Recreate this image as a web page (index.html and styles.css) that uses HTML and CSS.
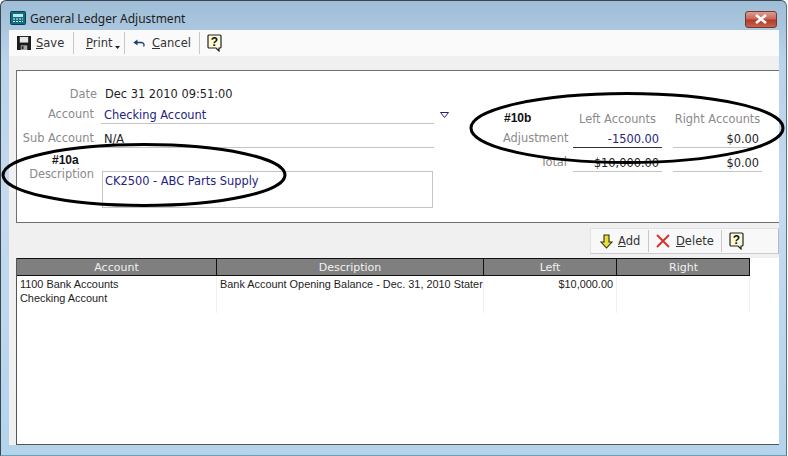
FILE: index.html
```html
<!DOCTYPE html>
<html lang="en">
<head>
    <meta charset="UTF-8">
    <title>General Ledger Adjustment</title>
    <link rel="stylesheet" href="styles.css">
</head>
<body>
    <div class="window">
        <div class="titlebar">
            <svg class="app-icon" width="16" height="14" viewBox="0 0 16 14">
                <rect x="0.5" y="0.5" width="15" height="13" rx="1" fill="#0c6f80" stroke="#123c4a"/>
                <rect x="3" y="3" width="10" height="3" fill="#bfe6ee"/>
                <path d="M3 8h2M6 8h2M9 8h2M12 8h1M3 10.500h2M6 10.500h2M9 10.500h2M12 10.500h1" stroke="#e6f4f6"/>
            </svg>
            <span class="title">General Ledger Adjustment</span>
            <div class="close-btn">
                <svg width="14" height="10" viewBox="0 0 14 10">
                    <path d="M2 1l10 8M12 1L2 9" stroke="#fff" stroke-width="2.600"/>
                </svg>
            </div>
        </div>

        <div class="toolbar">
            <div class="tool tool-save">
                <svg width="14" height="14" viewBox="0 0 15 15">
                    <path d="M0 0h15v15H0z" fill="#1c1c1c"/>
                    <rect x="3" y="1" width="9" height="6" fill="#e8e8e8"/>
                    <rect x="4" y="10" width="7" height="5" fill="#a8a8a8"/>
                    <rect x="5" y="11" width="2" height="3" fill="#222"/>
                </svg>
                <span><u>S</u>ave</span>
            </div>
            <div class="sep"></div>
            <div class="tool tool-print">
                <span><u>P</u>rint</span>
                <svg class="caret" width="5" height="3" viewBox="0 0 5 3"><path d="M0 0h5L2.500 3z" fill="#222"/></svg>
            </div>
            <div class="sep"></div>
            <div class="tool tool-cancel">
                <svg width="13" height="9" viewBox="0 0 13 9">
                    <path d="M1.500 3.500h6.500a3 2.500 0 0 1 2.500 4" fill="none" stroke="#223a78" stroke-width="1.300"/>
                    <path d="M4.500 0.500v6L0.500 3.500z" fill="#223a78"/>
                </svg>
                <span><u>C</u>ancel</span>
            </div>
            <div class="sep"></div>
            <div class="tool tool-help">
                <svg width="15" height="18" viewBox="0 0 15 18">
                    <path d="M2 1h11a1 1 0 0 1 1 1v11a1 1 0 0 1-1 1h-1v3l-3-3H2a1 1 0 0 1-1-1V2a1 1 0 0 1 1-1z" fill="#fdfbd8" stroke="#222" stroke-width="1.200"/>
                    <text x="7.500" y="12" class="help-mark">?</text>
                </svg>
            </div>
        </div>

        <div class="content">
            <div class="panel">
                <div class="form">
                    <span class="lbl lbl-date">Date</span>
                    <span class="val-date">Dec 31 2010 09:51:00</span>
                    <span class="lbl">Account</span>
                    <span class="field blue">Checking Account</span>
                    <span class="lbl">Sub Account</span>
                    <span class="field">N/A</span>
                    <span class="lbl lbl-desc">Description</span>
                    <div class="desc-box blue">CK2500 - ABC Parts Supply</div>
                </div>
                <svg class="drop" width="9" height="6" viewBox="0 0 9 6">
                    <path d="M0.500 0.500h8L4.500 5.500z" fill="#fff" stroke="#23237f"/>
                </svg>
                <div class="totals">
                    <span></span>
                    <span class="lbl head col2">Left Accounts</span>
                    <span class="lbl head">Right Accounts</span>
                    <span class="lbl side">Adjustment</span>
                    <span class="amt col2 blue active">-1500.00</span>
                    <span class="amt">$0.00</span>
                    <span class="lbl side">Total</span>
                    <span class="amt col2">$10,000.00</span>
                    <span class="amt">$0.00</span>
                </div>
            </div>

            <div class="sub-toolbar">
                <div class="tool tool-add">
                    <svg width="13" height="15" viewBox="0 0 13 15">
                        <path d="M4 1h5v7h3l-5.500 6L1 8h3z" fill="#e6dc3c" stroke="#33300c" stroke-width="1.100"/>
                    </svg>
                    <span><u>A</u>dd</span>
                </div>
                <div class="sep"></div>
                <div class="tool tool-delete">
                    <svg width="14" height="14" viewBox="0 0 14 14">
                        <path d="M1 1l12 12M13 1L1 13" stroke="#d8302a" stroke-width="1.900"/>
                    </svg>
                    <span><u>D</u>elete</span>
                </div>
                <div class="sep"></div>
                <div class="tool tool-help">
                    <svg width="15" height="18" viewBox="0 0 15 18">
                        <path d="M2 1h11a1 1 0 0 1 1 1v11a1 1 0 0 1-1 1h-1v3l-3-3H2a1 1 0 0 1-1-1V2a1 1 0 0 1 1-1z" fill="#fdfbd8" stroke="#222" stroke-width="1.200"/>
                        <text x="7.500" y="12" class="help-mark">?</text>
                    </svg>
                </div>
            </div>

            <div class="grid">
                <div class="grid-head">
                    <div class="col-account">Account</div>
                    <div class="col-desc">Description</div>
                    <div class="col-left">Left</div>
                    <div class="col-right">Right</div>
                </div>
                <div class="grid-row">
                    <div class="col-account">1100 Bank Accounts<br>Checking Account</div>
                    <div class="col-desc">Bank Account Opening Balance - Dec. 31, 2010 Stater</div>
                    <div class="col-left num">$10,000.00</div>
                    <div class="col-right"></div>
                </div>
            </div>
        </div>

        <!-- callouts drawn on top of the screen -->
        <svg class="callouts" width="788" height="456" viewBox="0 0 788 456">
            <ellipse cx="144" cy="175" rx="141" ry="30.500" fill="none" stroke="#000" stroke-width="3"/>
            <ellipse cx="627" cy="128" rx="156" ry="34.500" fill="none" stroke="#000" stroke-width="3"/>
        </svg>
        <span class="tag tag-a">#10a</span>
        <span class="tag tag-b">#10b</span>
    </div>
</body>
</html>
```

FILE: styles.css
```css
html, body {
    margin: 0;
    padding: 0;
}
body {
    width: 788px;
    height: 456px;
    overflow: hidden;
    background: #fff;
    font-family: "DejaVu Sans", Verdana, sans-serif;
    font-size: 11.400px;
    color: #222;
}
.window {
    position: relative;
    box-sizing: border-box;
    width: 787px;
    height: 456px;
    padding: 0 7px 10px 8px;
    display: flex;
    flex-direction: column;
    border-radius: 6px 6px 0 0;
    border-top: 1px solid #3a4650;
    border-left: 1px solid #3a4650;
    border-right: 1px solid #56727f;
    border-bottom: 1px solid #6aa0b8;
    background: linear-gradient(#9fbdd6 0, #b9d3ea 60px, #c4daf0 200px, #b4d4ec 100%);
}

/* title bar */
.titlebar {
    height: 29px;
    display: flex;
    align-items: center;
    flex: none;
}
.app-icon {
    margin: 5px 0 0 1px;
}
.title {
    margin: 5px 0 0 4px;
    font-family: "Noto Sans", "Open Sans", sans-serif;
    font-size: 12px;
    color: #1d1d1d;
}
.close-btn {
    margin: 7px 2px 0 auto;
    width: 30px;
    height: 15px;
    display: flex;
    align-items: center;
    justify-content: center;
    border: 1px solid #6e3a34;
    border-radius: 3px;
    background: linear-gradient(#dd9c90, #c86556 48%, #b03a2a 52%, #c8604c);
}

/* toolbars */
.toolbar {
    height: 26px;
    flex: none;
    display: flex;
    align-items: center;
    background: #fafafa;
}
.tool {
    display: flex;
    align-items: center;
    box-sizing: border-box;
    color: #333;
    font-size: 11.500px;
}
.sep {
    width: 1px;
    height: 22px;
    background: #c8c8c8;
    flex: none;
}
.tool-save {
    width: 64px;
    padding-left: 8px;
    gap: 5px;
}
.tool-print {
    width: 50px;
    padding-left: 12px;
}
.caret {
    margin: 9px 0 0 3px;
}
.tool-cancel {
    width: 74px;
    padding-left: 8px;
    gap: 6px;
}
.tool-help {
    padding-left: 7px;
}
.help-mark {
    font-family: "Liberation Sans", sans-serif;
    font-size: 12px;
    font-weight: bold;
    text-anchor: middle;
    fill: #111;
}

.content {
    flex: 1;
    min-height: 0;
    display: flex;
    flex-direction: column;
    background: #f0f0f0;
    padding-top: 14px;
    padding-left: 7px;
}

/* top form panel */
.panel {
    position: relative;
    flex: none;
    height: 153px;
    box-sizing: border-box;
    border: 1px solid #6f6f6f;
    border-right: 0;
    background: #fff;
    display: flex;
}
.blue {
    color: #23237f;
}
.lbl {
    color: #8a8a8a;
    text-align: right;
    white-space: nowrap;
}
.form {
    width: 417px;
    margin-top: 15px;
    flex: none;
    display: grid;
    grid-template-columns: 77px 333px;
    grid-template-rows: 21px 24px 40px 37px;
    column-gap: 7px;
    align-content: start;
}
.form > .lbl {
    line-height: 14px;
}
.lbl-date {
    margin-right: -3px;
    margin-top: 1px;
}
.val-date {
    padding-left: 4px;
    margin-top: 1px;
    color: #1d1d1d;
}
.field {
    box-sizing: border-box;
    height: 17px;
    border-bottom: 1px solid #c4c4c4;
    padding: 1px 0 0 3px;
}
.lbl-desc {
    margin-top: -4px;
}
.desc-box {
    box-sizing: border-box;
    margin-left: 1px;
    width: 331px;
    height: 37px;
    border: 1px solid #c4c4c4;
    padding: 2px;
}
.drop {
    position: absolute;
    left: 423px;
    top: 41px;
}
.totals {
    margin: 41px 0 0 69px;
    display: grid;
    grid-template-columns: 70px 100px 89px;
    grid-template-rows: 19px 24px 17px;
    align-content: start;
    flex: none;
}
.col2 {
    margin-right: 11px;
}
.side {
    padding-right: 6px;
}
.head {
    text-align: center;
}
.amt {
    box-sizing: border-box;
    height: 17px;
    text-align: right;
    border-bottom: 1px solid #c4c4c4;
    padding: 1px 3px 0 0;
}
.amt.active {
    border-bottom-color: #333;
}

/* add / delete bar */
.sub-toolbar {
    flex: none;
    align-self: flex-end;
    box-sizing: border-box;
    width: 189px;
    height: 26px;
    margin-top: 5px;
    display: flex;
    align-items: center;
    background: #f8f8f8;
    border: 1px solid #e2e2e2;
    border-right: 1px solid #bbb;
    border-bottom-color: #ccc;
}
.tool-add {
    width: 57px;
    padding-left: 9px;
    gap: 5px;
}
.tool-delete {
    width: 72px;
    padding-left: 7px;
    gap: 6px;
}

/* grid */
.grid {
    flex: 1;
    margin-top: 4px;
    background: #fff;
    border-left: 1px solid #555;
    border-bottom: 1px solid #555;
    font-family: "Liberation Sans", Arial, sans-serif;
    font-size: 10.900px;
}
.grid-head, .grid-row {
    display: flex;
    width: 733px;
}
.grid-head {
    height: 18px;
    box-sizing: border-box;
    background: #7f7f7f;
    border: 1px solid #111;
    border-left: 0;
    color: #f0f0f0;
    font-family: "DejaVu Sans", Verdana, sans-serif;
    font-size: 11px;
    line-height: 18px;
    text-align: center;
}
.grid-head > div {
    border-right: 1px solid #111;
    box-sizing: border-box;
    height: 16px;
}
.grid-head > div:last-child {
    border-right: 0;
}
.col-account {
    width: 200px;
    flex: none;
}
.col-desc {
    width: 267px;
    flex: none;
}
.col-left {
    width: 133px;
    flex: none;
}
.col-right {
    width: 133px;
    flex: none;
}
.grid-row {
    height: 37px;
    color: #1d1d1d;
    line-height: 14px;
}
.grid-row > div {
    box-sizing: border-box;
    padding: 1px 3px;
    border-right: 1px solid #f0f0f0;
    white-space: nowrap;
}
.num {
    text-align: right;
}

/* callouts */
.callouts {
    position: absolute;
    left: -1px;
    top: -1px;
    pointer-events: none;
}
.tag {
    position: absolute;
    font-family: "Liberation Sans", Arial, sans-serif;
    font-size: 12px;
    font-weight: bold;
    color: #111;
}
.tag-a {
    left: 51px;
    top: 152px;
}
.tag-b {
    left: 503px;
    top: 110px;
}
```
